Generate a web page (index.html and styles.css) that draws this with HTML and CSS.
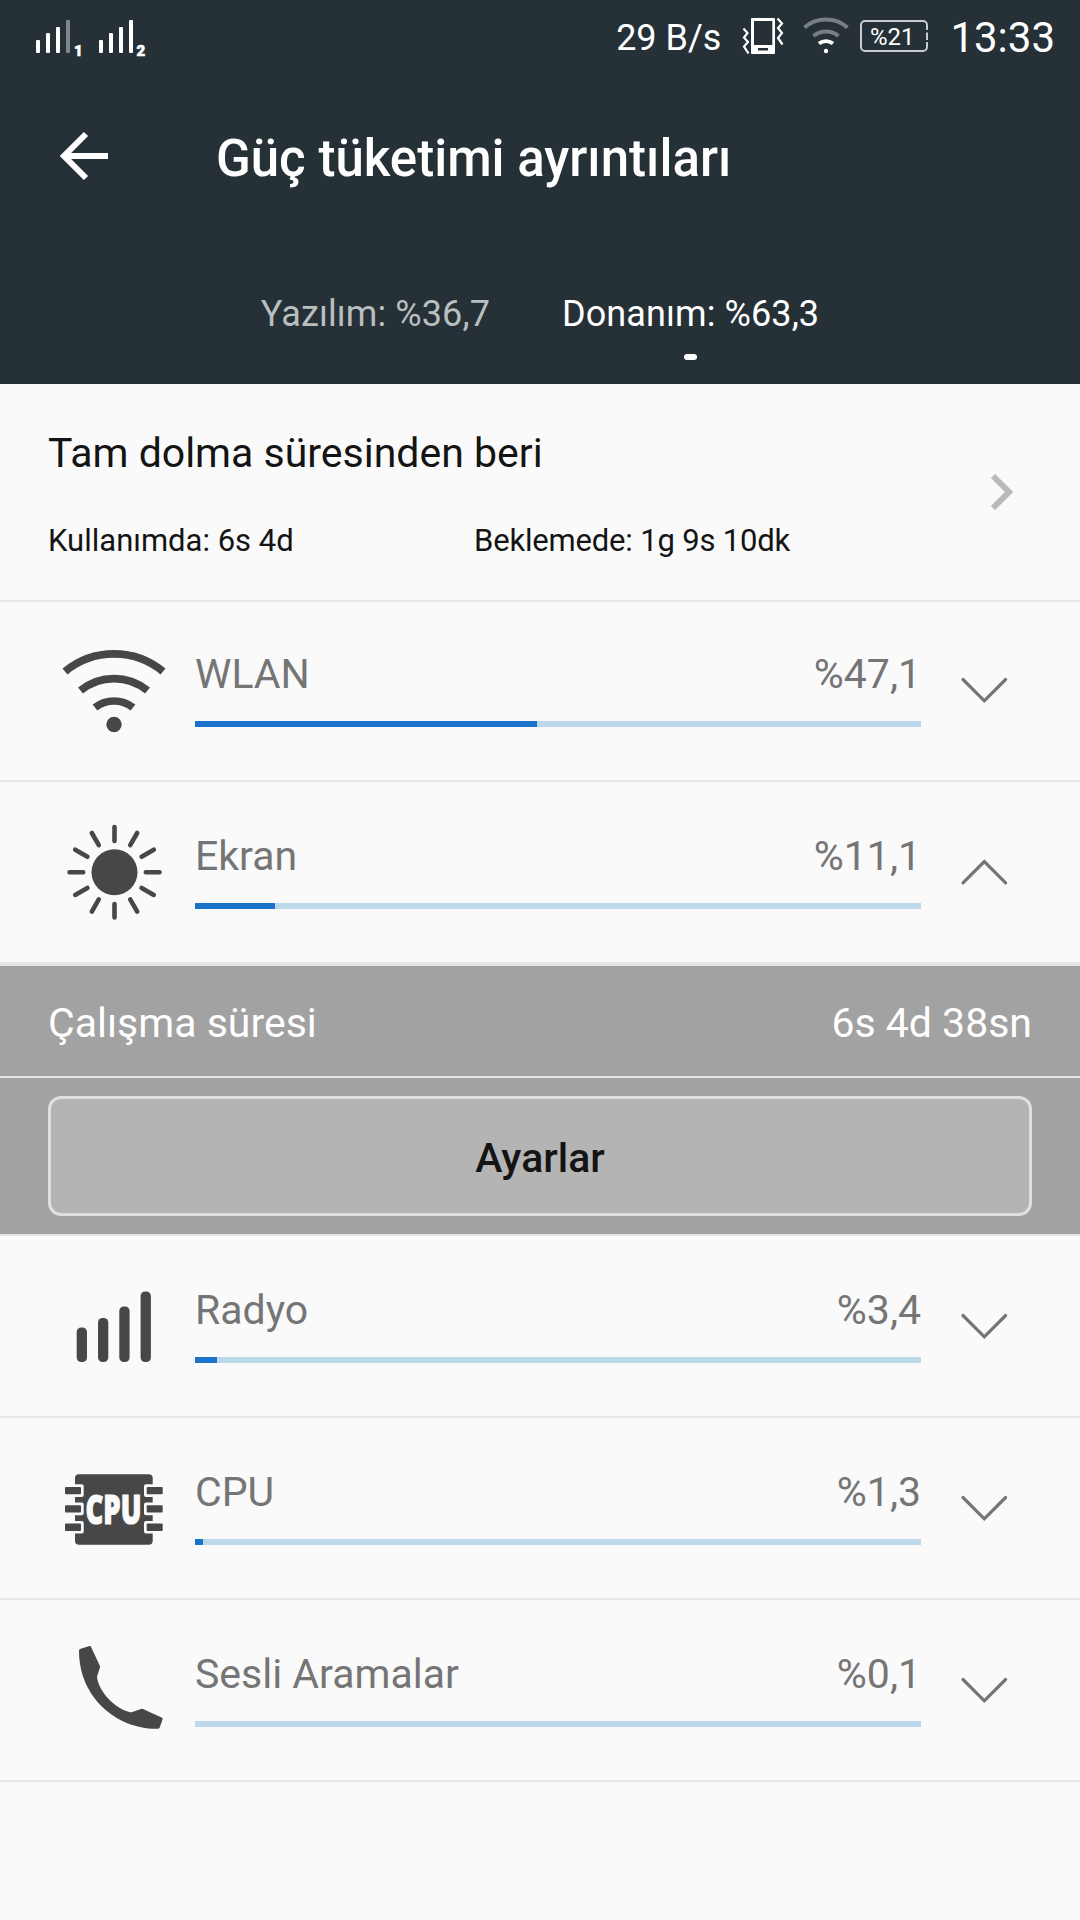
FILE: index.html
```html
<!DOCTYPE html>
<html lang="tr">
<head>
<meta charset="utf-8">
<title>Güç tüketimi ayrıntıları</title>
<link rel="stylesheet" href="styles.css">
</head>
<body>
<header class="header">
  <div class="status">
    <svg class="status-signals" width="114" height="44" viewBox="34 16 114 44" fill="#fff">
      <rect x="36" y="40" width="4" height="13" rx="1"/><rect x="46" y="33" width="4" height="20" rx="1"/><rect x="56" y="27" width="4" height="26" rx="1"/><rect x="66" y="20" width="4" height="33" rx="1" opacity=".42"/>
      <text class="sim" x="74" y="56">1</text>
      <rect x="99" y="40" width="4" height="13" rx="1"/><rect x="109" y="33" width="4" height="20" rx="1"/><rect x="119" y="27" width="4" height="26" rx="1"/><rect x="129" y="20" width="4" height="33" rx="1"/>
      <text class="sim" x="136.500" y="56">2</text>
    </svg>
    <span class="speed">29 B/s</span>
    <svg class="vibrate" width="44" height="44" viewBox="741 14 44 44">
      <path fill="#fff" fill-rule="evenodd" d="M752 18h22a1 1 0 0 1 1 1v34a1 1 0 0 1-1 1h-22a1 1 0 0 1-1-1V19a1 1 0 0 1 1-1zM754 21v24h18.300V21zM758 48v2.500h10V48z"/>
      <path fill="none" stroke="#fff" stroke-width="2.200" d="M743.500 28.500l4 4.500-3.500 4.500 4 4.500-4 4.500 4.500 7M777.500 18.500l4.500 5-4 4.500 4 5-4 5 4.500 6.500"/>
    </svg>
    <svg class="status-wifi" width="48" height="44" viewBox="802 14 48 44" fill="none" stroke="#fff" stroke-width="4">
      <path d="M804.500 27.500a33 33 0 0 1 43 0M813.500 36a20 20 0 0 1 25 0" opacity=".38"/>
      <path d="M819 43.500a12 12 0 0 1 14 0"/><circle cx="826" cy="51" r="2.200" fill="#fff" stroke="none"/>
    </svg>
    <svg class="battery" width="68" height="44" viewBox="860 14 68 44">
      <path fill="none" stroke="#c9cccd" stroke-width="2" d="M927 30v-5a4 4 0 0 0-4-4h-58a4 4 0 0 0-4 4v22a4 4 0 0 0 4 4h58a4 4 0 0 0 4-4v-5M927 32.500v7.500"/>
      <text class="level" x="870" y="45">%21</text>
    </svg>
    <span class="clock">13:33</span>
  </div>
  <div class="title-bar">
    <svg class="back" width="50" height="50" viewBox="59 131 50 50" fill="none" stroke="#fff" stroke-width="6"><path d="M108 156H65M86 134l-22 22 22 22"/></svg>
    <h1 class="title">Güç tüketimi ayrıntıları</h1>
  </div>
  <nav class="tabs">
    <span class="tab">Yazılım: %36,7</span>
    <span class="tab tab-active">Donanım: %63,3</span>
  </nav>
</header>
<main>
  <section class="summary">
    <div class="summary-text">
      <h2 class="summary-title">Tam dolma süresinden beri</h2>
      <div class="summary-times"><span>Kullanımda: 6s 4d</span><span class="standby">Beklemede: 1g 9s 10dk</span></div>
    </div>
    <svg class="next" width="24" height="38" viewBox="990 473 24 38" fill="none" stroke="#bababa" stroke-width="6"><path d="M993 476l16 16-16 16"/></svg>
  </section>

  <section class="row row-first">
    <svg class="icon" width="132" height="100" viewBox="48 40 132 100" fill="none" stroke="#474747" stroke-width="7.700">
      <path d="M65 73.500a77 77 0 0 1 98 0M80.500 92.500a53 53 0 0 1 67 0M95 109.500a31 31 0 0 1 38 0"/><circle cx="114" cy="126.500" r="7.700" fill="#474747" stroke="none"/>
    </svg>
    <div class="usage"><div class="labels"><span>WLAN</span><span>%47,1</span></div><div class="bar"><div class="fill" style="width:47.1%"></div></div></div>
    <svg class="chevron" width="48" height="28" viewBox="960 78 48 28"><path d="M963 81.500l21.300 21.300 21.300-21.300"/></svg>
  </section>

  <section class="row">
    <svg class="icon" width="132" height="100" viewBox="48 40 132 100" fill="none" stroke="#474747" stroke-width="4.600" stroke-linecap="round">
      <circle cx="114.500" cy="92.300" r="23" fill="#474747" stroke="none"/>
      <path d="M114.500 61V47M114.500 137.500V124M145.800 92.300H159.500M83.200 92.300H69.500M130.200 65.200l7-12.200M98.800 65.200l-7-12.200M130.200 119.400l7 12.200M98.800 119.400l-7 12.200M141.600 76.700l12.200-7M87.400 76.700l-12.200-7M141.600 107.900l12.200 7M87.400 107.900l-12.200 7"/>
    </svg>
    <div class="usage"><div class="labels"><span>Ekran</span><span>%11,1</span></div><div class="bar"><div class="fill" style="width:11%"></div></div></div>
    <svg class="chevron" width="48" height="28" viewBox="960 78 48 28"><path d="M963 102.800l21.300-21.300 21.300 21.300"/></svg>
  </section>

  <section class="details">
    <div class="detail"><span>Çalışma süresi</span><span>6s 4d 38sn</span></div>
    <div class="actions"><button class="settings">Ayarlar</button></div>
  </section>

  <section class="row">
    <svg class="icon" width="132" height="100" viewBox="48 40 132 100" fill="#474747">
      <rect x="76.700" y="93.500" width="10.300" height="34.500" rx="4.500"/><rect x="98" y="84" width="10.300" height="44" rx="4.500"/><rect x="119.300" y="72.500" width="10.300" height="55.500" rx="4.500"/><rect x="140.600" y="57.500" width="10.300" height="70.500" rx="4.500"/>
    </svg>
    <div class="usage"><div class="labels"><span>Radyo</span><span>%3,4</span></div><div class="bar"><div class="fill" style="width:3%"></div></div></div>
    <svg class="chevron" width="48" height="28" viewBox="960 78 48 28"><path d="M963 81.500l21.300 21.300 21.300-21.300"/></svg>
  </section>

  <section class="row">
    <svg class="icon" width="132" height="100" viewBox="48 40 132 100" fill="#474747">
      <rect x="75" y="58.300" width="77.700" height="70.500" rx="4"/>
      <g fill="#fafafa">
        <rect x="70" y="68.300" width="13.700" height="12.700" rx="2"/><rect x="70" y="86.600" width="13.700" height="12.700" rx="2"/><rect x="70" y="104.900" width="13.700" height="12.700" rx="2"/>
        <rect x="144" y="68.300" width="13.700" height="12.700" rx="2"/><rect x="144" y="86.600" width="13.700" height="12.700" rx="2"/><rect x="144" y="104.900" width="13.700" height="12.700" rx="2"/>
      </g>
      <rect x="65" y="71" width="16" height="7.300" rx="1"/><rect x="65" y="89.300" width="16" height="7.300" rx="1"/><rect x="65" y="107.600" width="16" height="7.300" rx="1"/>
      <rect x="146.700" y="71" width="16" height="7.300" rx="1"/><rect x="146.700" y="89.300" width="16" height="7.300" rx="1"/><rect x="146.700" y="107.600" width="16" height="7.300" rx="1"/>
      <text class="chip" x="85.500" y="107.600" textLength="56" lengthAdjust="spacingAndGlyphs">CPU</text>
    </svg>
    <div class="usage"><div class="labels"><span>CPU</span><span>%1,3</span></div><div class="bar"><div class="fill" style="width:1.1%"></div></div></div>
    <svg class="chevron" width="48" height="28" viewBox="960 78 48 28"><path d="M963 81.500l21.300 21.300 21.300-21.300"/></svg>
  </section>

  <section class="row">
    <svg class="icon" width="132" height="100" viewBox="48 40 132 100" fill="#474747">
      <path d="M80 51l9.500-3q1-.3 1.500.7l8.800 19q.5 1 .1 2l-2.600 8q-.5 1.500-.1 3c3 14 17 29 32 33.300q1.500.4 3 0l8.800-3q1-.4 2 0l18.600 8.500q1.400.6 1 1.700l-3 8.500q-.4 1-1.600 1C119 132 79 101 79 53q0-1.600 1-2z"/>
    </svg>
    <div class="usage"><div class="labels"><span>Sesli Aramalar</span><span>%0,1</span></div><div class="bar"></div></div>
    <svg class="chevron" width="48" height="28" viewBox="960 78 48 28"><path d="M963 81.500l21.300 21.300 21.300-21.300"/></svg>
  </section>
</main>
</body>
</html>
```
FILE: styles.css
```css
* { box-sizing: border-box; }
body { margin: 0; width: 1080px; min-height: 1920px; background: #fafafa; font-family: Roboto, sans-serif; font-size: 41px; line-height: 50px; color: #141414; }
svg { display: block; flex: none; }
h1, h2 { margin: 0; font-size: inherit; font-weight: inherit; white-space: nowrap; }

.header { height: 384px; background: #253137; color: #fff; }
.status { height: 74px; padding: 14px 25px 0 34px; display: flex; align-items: flex-start; line-height: 44px; }
.sim { font: 900 15px Roboto, sans-serif; stroke: #fff; stroke-width: .6px; }
.speed { margin-left: auto; font-size: 36px; line-height: 48px; }
.status-signals { margin-top: 2px; }
.vibrate { margin-left: 20px; }
.status-wifi { margin-left: 17px; }
.battery { margin-left: 10px; }
.level { font: 24px Roboto, sans-serif; fill: #fff; }
.clock { margin-left: 22px; font-size: 42px; line-height: 47px; }
.title-bar { height: 164px; padding: 0 59px; display: flex; align-items: center; gap: 107px; }
.title { font-size: 51px; font-weight: 500; line-height: 60px; padding-top: 5px; }
.tabs { display: flex; justify-content: center; gap: 72px; padding-top: 54px; font-size: 36px; line-height: 44px; letter-spacing: .1px; }
.tab { color: #b9bebf; white-space: nowrap; }
.tab-active { color: #fff; display: flex; flex-direction: column; align-items: center; gap: 18px; }
.tab-active::after { content: ""; width: 13px; height: 6px; border-radius: 3px; background: #fff; }

.summary { height: 218px; padding: 44px 66px 0 48px; border-bottom: 2px solid #e6e6e6; display: flex; justify-content: space-between; }
.summary-times { display: grid; grid-template-columns: 426px auto; margin-top: 43px; font-size: 31px; line-height: 40px; }
.standby { letter-spacing: -.18px; }
.next { margin-top: 45px; }

.row { height: 182px; padding: 0 72px 42px 48px; border-bottom: 2px solid #e6e6e6; display: flex; align-items: flex-end; color: #757575; }
.row-first { height: 180px; }
.usage { width: 726px; margin: 0 39px 11px 15px; }
.labels { display: flex; justify-content: space-between; margin-bottom: 22px; }
.bar { height: 6px; background: #bdd7eb; }
.fill { height: 6px; background: #1a73ca; }
.chevron { margin-bottom: 34px; fill: none; stroke: #757575; stroke-width: 3.2px; stroke-linecap: round; }
.chip { font: 800 41px "Open Sans", sans-serif; fill: #fafafa; stroke: #fafafa; stroke-width: 1.2px; }

.details { border-top: 2px solid #e6e6e6; border-bottom: 2px solid #e6e6e6; background: #a2a2a2; color: #fff; }
.detail { height: 112px; padding: 32px 48px 0; border-bottom: 2px solid #e6e6e6; display: flex; justify-content: space-between; }
.actions { padding: 18px 48px; }
.settings { display: block; width: 100%; height: 120px; padding: 4px 0 0; border: 3px solid #e0e0e0; border-radius: 13px; background: #b4b4b4; color: #141414; font: 500 41px/50px Roboto, sans-serif; }
```
